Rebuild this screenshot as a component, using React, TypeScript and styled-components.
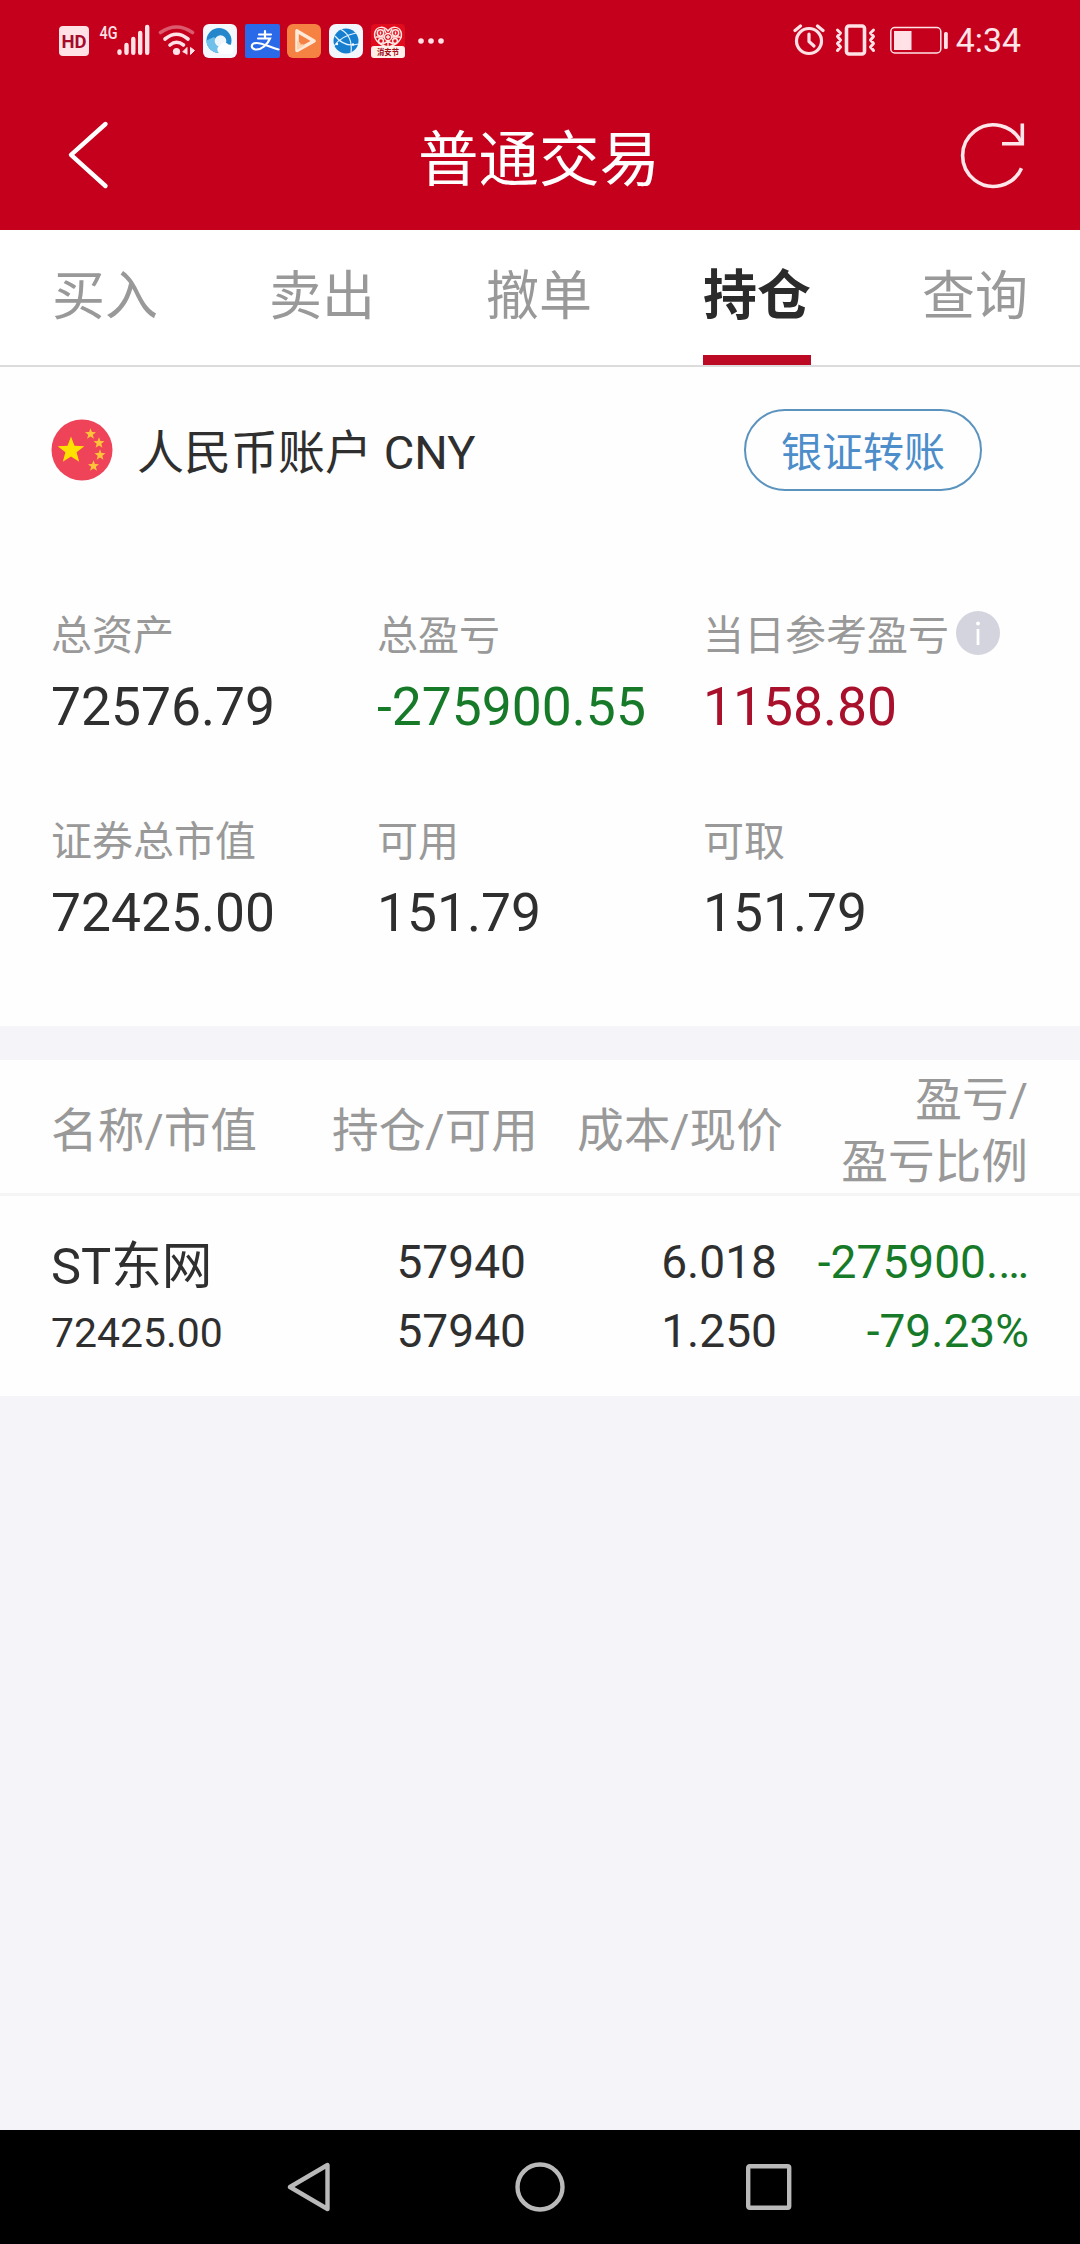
import React from 'react';
import styled, { createGlobalStyle } from 'styled-components';

const Global = createGlobalStyle`
  * { box-sizing: border-box; }
  html, body { margin: 0; padding: 0; }
  body { background: #f5f5f9; }
  svg { display: block; flex: none; }
`;

const Screen = styled.div`
  width: 1080px;
  height: 2244px;
  display: flex;
  flex-direction: column;
  overflow: hidden;
  background: #f5f5f9;
  color: #2f2f2f;
  font-family: Roboto, 'Noto Sans CJK SC', sans-serif;
`;

const Top = styled.header`
  background: #c4001d;
  height: 230px;
  flex: none;
  color: #fff;
`;

const StatusBar = styled.div`
  height: 80px;
  padding: 2px 59px 0;
  display: flex;
  align-items: center;
  justify-content: space-between;
`;

const StatusGroup = styled.div`
  display: flex;
  align-items: center;
`;

const Slot = styled.span<{ $left?: number }>`
  display: block;
  margin-left: ${(p) => p.$left ?? 0}px;
`;

const Clock = styled.span`
  margin-left: 7px;
  font-size: 33.8px;
  line-height: 40px;
  color: #ffe4e8;
`;

const TitleBar = styled.div`
  height: 150px;
  padding: 0 52px 0 64px;
  display: grid;
  grid-template-columns: 54px 1fr 68px;
  align-items: start;
`;

const IconButton = styled.button<{ $top: number }>`
  border: 0;
  padding: 0;
  margin-top: ${(p) => p.$top}px;
  background: none;
`;

const Title = styled.h1`
  margin: 36px 0 0;
  font-size: 60.5px;
  line-height: 90px;
  font-weight: 400;
  text-align: center;
`;

const Tabs = styled.nav`
  height: 137px;
  flex: none;
  padding: 0 52px;
  display: flex;
  justify-content: space-between;
  background: #fff;
  border-bottom: 2px solid #dcdcdc;
`;

const Tab = styled.button<{ $active?: boolean }>`
  width: ${(p) => (p.$active ? 108 : 106)}px;
  height: 135px;
  padding: 9px 0 0;
  border: 0;
  border-bottom: 10px solid ${(p) => (p.$active ? '#bd0a24' : 'transparent')};
  background: none;
  font-family: inherit;
  font-size: ${(p) => (p.$active ? 54 : 53)}px;
  line-height: 80px;
  white-space: nowrap;
  font-weight: ${(p) => (p.$active ? 700 : 400)};
  color: ${(p) => (p.$active ? '#2b2b2b' : '#999')};
`;

const Summary = styled.section`
  height: 659px;
  flex: none;
  padding: 42px 53px 0 51px;
  background: #fefefe;
`;

const Account = styled.div`
  height: 82px;
  padding-right: 45px;
  display: flex;
  align-items: center;
`;

const AccountName = styled.span`
  flex: 1;
  margin: 6px 0 0 24px;
  font-size: 47px;
  line-height: 60px;
`;

const Transfer = styled.button`
  width: 238px;
  height: 82px;
  padding: 5px 0 0;
  border: 2px solid #5b93bf;
  border-radius: 41px;
  background: none;
  color: #4c8dca;
  font-family: inherit;
  font-size: 41px;
  line-height: 60px;
`;

const Stats = styled.div`
  margin-top: 112px;
  display: grid;
  grid-template-columns: 326px 326px 1fr;
  grid-auto-rows: 206px;
`;

const Stat = styled.div`
  display: flex;
  flex-direction: column;
`;

const StatLabel = styled.div`
  height: 60px;
  display: flex;
  align-items: center;
  gap: 7px;
  white-space: nowrap;
  color: #999;
`;

const StatText = styled.span`
  padding-top: 5px;
  font-size: 41px;
  line-height: 60px;
`;

type Tone = 'plain' | 'up' | 'down';
const tones: Record<Tone, string> = { plain: '#2f2f2f', up: '#a9102b', down: '#167a28' };

const StatValue = styled.div<{ $tone: Tone }>`
  margin-top: 9px;
  font-size: 53.4px;
  line-height: 70px;
  color: ${(p) => tones[p.$tone]};
`;

const Holdings = styled.section`
  margin-top: 34px;
  flex: none;
  background: #fefefe;
`;

const HeadRow = styled.div`
  height: 136px;
  padding: 9px 52px 0 51px;
  display: grid;
  grid-template-columns: 241px 246px 245px 245px;
  align-items: center;
  border-bottom: 3px solid #f5f5f6;
`;

const Head = styled.div<{ $first?: boolean }>`
  font-size: 46.7px;
  line-height: 62px;
  color: #999;
  text-align: ${(p) => (p.$first ? 'left' : 'right')};
`;

const Row = styled.div`
  height: 200px;
  padding: 32px 51px 0;
  display: grid;
  grid-template-columns: 240px 235px 251px 252px;
`;

const Cell = styled.div<{ $tone?: Tone }>`
  font-size: 46.1px;
  line-height: 69px;
  text-align: right;
  color: ${(p) => tones[p.$tone ?? 'plain']};
`;

const NameCell = styled.div`
  display: flex;
  flex-direction: column;
`;

const StockName = styled.div`
  padding-top: 2px;
  height: 72px;
  font-size: 50.6px;
  line-height: 74px;
`;

const StockValue = styled.div`
  font-size: 40.9px;
  line-height: 66px;
`;

const Line = styled.div`
  overflow: hidden;
  white-space: nowrap;
`;

const NavBar = styled.footer`
  height: 114px;
  margin-top: auto;
  flex: none;
  padding: 32px 288px 0 287px;
  display: flex;
  justify-content: space-between;
  background: #000;
`;

const pale = '#ffe1e6';

const Network = () => (
  <svg width="136" height="36" viewBox="59 23 136 36">
    <rect x="59" y="26" width="30" height="30" rx="4" fill={pale} />
    <text x="61.5" y="48" fontSize="19" fontWeight="700" textLength="25" lengthAdjust="spacingAndGlyphs" fill="#a50a2a" fontFamily="Roboto">HD</text>
    <text x="99.5" y="38.5" fontSize="18.5" fontWeight="500" textLength="18" lengthAdjust="spacingAndGlyphs" fill={pale} fontFamily="Roboto">4G</text>
    <g stroke={pale} strokeWidth="4.4" strokeLinecap="round">
      <path d="M119.5 51.5v1.3M126.5 45v7.8M133.3 39v13.8M140.2 33v19.8M147.2 27v25.8" />
    </g>
    <g fill="none" stroke={pale} strokeWidth="3.6" strokeLinecap="round">
      <path d="M160.5 32.5Q176.5 21.5 192.5 32.5" opacity=".4" />
      <path d="M165 39Q176.5 29.5 188 39" />
      <path d="M170 45Q176.5 39.5 183.5 45" />
    </g>
    <circle cx="176.5" cy="51.5" r="3.6" fill={pale} />
    <path d="M182.5 52l4.5-4.5v7M190.5 47.5v7l4-4z" fill={pale} stroke={pale} strokeWidth="1" />
  </svg>
);

const BrowserApp = () => (
  <svg width="34" height="34" viewBox="0 0 34 34">
    <rect width="34" height="34" rx="6" fill="#f4f8fc" />
    <circle cx="16" cy="16.5" r="12.5" fill="#2487cc" />
    <path d="M3.5 16.5A12.5 12.5 0 0 0 16 29l3-8-8-8z" fill="#6fc0ea" />
    <circle cx="17.5" cy="17" r="5.8" fill="#eef6fc" />
    <path d="M18 30a4.5 4.5 0 0 1-1-8.5 5 5 0 0 1 8.500-1 5 5 0 0 1 5 4.500q0 5-4.500 5z" fill="#fdfeff" />
  </svg>
);

const PayApp = () => (
  <svg width="35" height="34" viewBox="0 0 35 34">
    <rect width="35" height="34" rx="2" fill="#2a6ae8" />
    <g fill="none" stroke="#fff" strokeWidth="2.2" strokeLinecap="round">
      <path d="M14 10.500h12M20 7v7.500M13 14.500h12C22.500 20.500 17 25.500 11.500 25.500c-6.500 0-6-6.500 0-6.500 6 0 13 4 22 6.500" />
    </g>
  </svg>
);

const VideoApp = () => (
  <svg width="34" height="34" viewBox="0 0 34 34">
    <rect width="34" height="34" rx="6" fill="#f58243" />
    <path d="M10 15v11.5L27 17 10 7z" fill="none" stroke="#ffe9d8" strokeWidth="3.6" strokeLinejoin="round" strokeLinecap="round" />
    <path d="M10 17v9l8-4.5z" fill="#ffd0ac" />
    <path d="M13.5 13v8l6.5-4z" fill="#f58243" />
  </svg>
);

const GlobeApp = () => (
  <svg width="34" height="34" viewBox="0 0 34 34">
    <rect width="34" height="34" rx="7" fill="#f1f7fc" />
    <circle cx="17" cy="17" r="12.5" fill="#167fd0" />
    <g fill="none" stroke="#e6f4ff" strokeWidth="1.2">
      <path d="M12 5.5Q24 12 22 28.5M27 9Q12 12 5 22M6 12Q16 24 29 20" />
    </g>
    <circle cx="8" cy="20" r="1.2" fill="#fff" />
    <circle cx="24" cy="20.5" r="1.2" fill="#fff" />
  </svg>
);

const FestivalApp = () => (
  <svg width="34" height="34" viewBox="0 0 34 34" overflow="visible">
    <rect width="34" height="34" rx="4" fill="#e00b1c" />
    <g fill="none" stroke="#ffe9e4" strokeWidth="1.5">
      <path d="M17 23C7 21 2 14 4 8s9-6 13-1c4-5 11-5 13 1s-3 13-13 15z" />
      <circle cx="9.5" cy="9" r="3.2" />
      <circle cx="24.5" cy="9" r="3.2" />
      <circle cx="17" cy="13" r="3.6" />
      <circle cx="10" cy="17" r="2.4" />
      <circle cx="24" cy="17" r="2.4" />
      <path d="M15 13h4M17 11v4M13 5l2 4M21 5l-2 4M17 17v5M5 13h8M21 13h8M12 20l5-3 5 3M9.5 7.5v3M24.5 7.5v3" />
    </g>
    <rect y="22" width="34" height="12" rx="3" fill="#fff0ec" />
    <text x="6" y="31" fontSize="8.5" fontWeight="700" textLength="22" lengthAdjust="spacingAndGlyphs" fill="#a01018" fontFamily="Noto Sans CJK SC">消安节</text>
  </svg>
);

const More = () => (
  <svg width="28" height="8" viewBox="0 0 28 8" fill={pale}>
    <circle cx="4" cy="4" r="2.8" />
    <circle cx="14" cy="4" r="2.8" />
    <circle cx="24" cy="4" r="2.8" />
  </svg>
);

const DeviceState = () => (
  <svg width="156" height="36" viewBox="792 23 156 36" fill="none" stroke={pale}>
    <circle cx="808" cy="41" r="12.5" strokeWidth="3.2" />
    <path d="M808 34v7.5l5 4.5" strokeWidth="3.2" strokeLinecap="round" strokeLinejoin="round" />
    <path d="M794 30.5l5.5-4.5M822 30.5l-5.5-4.5" strokeWidth="3.2" strokeLinecap="round" />
    <rect x="845.5" y="26" width="18" height="28" rx="2.5" strokeWidth="3.6" />
    <path d="M836.5 30l3 3-3 3.5 3 3.5-3 3.5 3 3.5-3 3.5M872.5 30l-3 3 3 3.5-3 3.5 3 3.5-3 3.5 3 3.5" strokeWidth="3" strokeLinejoin="round" strokeLinecap="round" />
    <rect x="889.8" y="27.5" width="50" height="25.5" rx="4" strokeWidth="1.5" />
    <rect x="893" y="31" width="17.5" height="19" fill={pale} stroke="none" />
    <rect x="943" y="32" width="3.8" height="17" rx="1.5" fill={pale} stroke="none" />
  </svg>
);

const BackIcon = () => (
  <svg width="48" height="72" viewBox="0 0 48 72" fill="none" stroke="#fff" strokeWidth="4.4" strokeLinecap="round" strokeLinejoin="round">
    <path d="M41.5 5L7 35.8 41.5 67" />
  </svg>
);

const RefreshIcon = () => (
  <svg width="68" height="70" viewBox="0 0 68 70" fill="none" stroke="#ffe6ea" strokeWidth="3.6">
    <path d="M61.5 47.2A30.8 30.8 0 1 1 61.5 22" />
    <path d="M62.3 2.5V22.8H42" />
  </svg>
);

const starPoints = (cx: number, cy: number, r: number) =>
  Array.from({ length: 10 }, (_, i) => {
    const radius = i % 2 ? r * 0.42 : r;
    const angle = (Math.PI / 5) * i - Math.PI / 2;
    return `${cx + radius * Math.cos(angle)},${cy + radius * Math.sin(angle)}`;
  }).join(' ');

const Flag = () => (
  <svg width="62" height="62" viewBox="0 0 62 62">
    <circle cx="31" cy="31" r="30.5" fill="#ee4358" />
    <polygon points={starPoints(20, 31.5, 14)} fill="#ffe100" />
    <g fill="#ffc43a">
      <polygon points={starPoints(39.5, 15, 5.8)} />
      <polygon points={starPoints(48, 24, 5.8)} />
      <polygon points={starPoints(49, 36, 5.8)} />
      <polygon points={starPoints(42.5, 47, 5.8)} />
    </g>
  </svg>
);

const Info = () => (
  <svg width="44" height="44" viewBox="0 0 44 44">
    <circle cx="22" cy="22" r="22" fill="#d3d4de" />
    <circle cx="22" cy="12.5" r="1.9" fill="#fff" />
    <path d="M22 18v16" stroke="#fff" strokeWidth="2.8" />
  </svg>
);

const tabs = ['买入', '卖出', '撤单', '持仓', '查询'];

const stats: { label: string; value: string; tone: Tone; info?: boolean }[] = [
  { label: '总资产', value: '72576.79', tone: 'plain' },
  { label: '总盈亏', value: '-275900.55', tone: 'down' },
  { label: '当日参考盈亏', value: '1158.80', tone: 'up', info: true },
  { label: '证券总市值', value: '72425.00', tone: 'plain' },
  { label: '可用', value: '151.79', tone: 'plain' },
  { label: '可取', value: '151.79', tone: 'plain' },
];

export default function App() {
  return (
    <Screen>
      <Global />
      <Top>
        <StatusBar>
          <StatusGroup>
            <Network />
            <Slot $left={8}><BrowserApp /></Slot>
            <Slot $left={8}><PayApp /></Slot>
            <Slot $left={7}><VideoApp /></Slot>
            <Slot $left={8}><GlobeApp /></Slot>
            <Slot $left={8}><FestivalApp /></Slot>
            <Slot $left={12}><More /></Slot>
          </StatusGroup>
          <StatusGroup>
            <DeviceState />
            <Clock>4:34</Clock>
          </StatusGroup>
        </StatusBar>
        <TitleBar>
          <IconButton $top={39} aria-label="返回"><BackIcon /></IconButton>
          <Title>普通交易</Title>
          <IconButton $top={41} aria-label="刷新"><RefreshIcon /></IconButton>
        </TitleBar>
      </Top>

      <Tabs>
        {tabs.map((t) => (
          <Tab key={t} $active={t === '持仓'}>{t}</Tab>
        ))}
      </Tabs>

      <Summary>
        <Account>
          <Flag />
          <AccountName>人民币账户 CNY</AccountName>
          <Transfer>银证转账</Transfer>
        </Account>
        <Stats>
          {stats.map((s) => (
            <Stat key={s.label}>
              <StatLabel>
                <StatText>{s.label}</StatText>
                {s.info && <Info />}
              </StatLabel>
              <StatValue $tone={s.tone}>{s.value}</StatValue>
            </Stat>
          ))}
        </Stats>
      </Summary>

      <Holdings>
        <HeadRow>
          <Head $first>名称/市值</Head>
          <Head>持仓/可用</Head>
          <Head>成本/现价</Head>
          <Head>盈亏/<br />盈亏比例</Head>
        </HeadRow>
        <Row>
          <NameCell>
            <StockName>ST东网</StockName>
            <StockValue>72425.00</StockValue>
          </NameCell>
          <Cell>
            <Line>57940</Line>
            <Line>57940</Line>
          </Cell>
          <Cell>
            <Line>6.018</Line>
            <Line>1.250</Line>
          </Cell>
          <Cell $tone="down">
            <Line>-275900.…</Line>
            <Line>-79.23%</Line>
          </Cell>
        </Row>
      </Holdings>

      <NavBar>
        <svg width="46" height="50" viewBox="0 0 46 50" fill="none" stroke="#b9b9b9" strokeWidth="4.4" strokeLinejoin="round">
          <path d="M40.5 3v44L3 25z" />
        </svg>
        <svg width="50" height="50" viewBox="0 0 50 50" fill="none" stroke="#b9b9b9" strokeWidth="4.4">
          <circle cx="25" cy="25" r="22.5" />
        </svg>
        <svg width="46" height="50" viewBox="0 0 46 50" fill="none" stroke="#b9b9b9" strokeWidth="4.4">
          <rect x="2.2" y="4.2" width="41" height="41.6" rx="1.5" />
        </svg>
      </NavBar>
    </Screen>
  );
}
